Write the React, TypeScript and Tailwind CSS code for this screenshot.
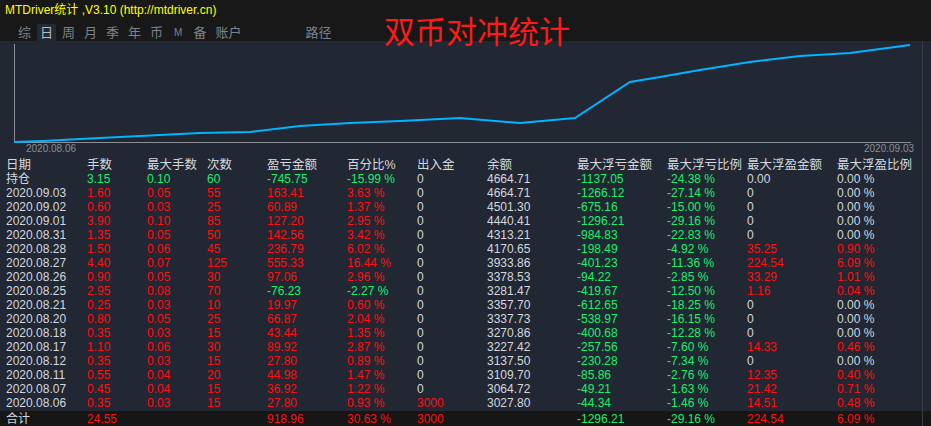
import React from "react";

const R = "text-[#ff1010]";
const G = "text-[#19f06a]";
const W = "text-[#d4d8de]";

type Cell = [string, string];

const cols = [0, 87, 147, 207, 267, 347, 417, 487, 577, 667, 747, 837];
const widths = cols.map((c, i) => (i < cols.length - 1 ? cols[i + 1] - c : 931 - c));

const headers = ["日期", "手数", "最大手数", "次数", "盈亏金额", "百分比%", "出入金", "余额", "最大浮亏金额", "最大浮亏比例", "最大浮盈金额", "最大浮盈比例"];

const raw: string[][] = [
  ["2020.09.03", "1.60", "0.05", "55", "163.41", "3.63 %", "0", "4664.71", "-1266.12", "-27.14 %", "0", "0.00 %"],
  ["2020.09.02", "0.60", "0.03", "25", "60.89", "1.37 %", "0", "4501.30", "-675.16", "-15.00 %", "0", "0.00 %"],
  ["2020.09.01", "3.90", "0.10", "85", "127.20", "2.95 %", "0", "4440.41", "-1296.21", "-29.16 %", "0", "0.00 %"],
  ["2020.08.31", "1.35", "0.05", "50", "142.56", "3.42 %", "0", "4313.21", "-984.83", "-22.83 %", "0", "0.00 %"],
  ["2020.08.28", "1.50", "0.06", "45", "236.79", "6.02 %", "0", "4170.65", "-198.49", "-4.92 %", "35.25", "0.90 %"],
  ["2020.08.27", "4.40", "0.07", "125", "555.33", "16.44 %", "0", "3933.86", "-401.23", "-11.36 %", "224.54", "6.09 %"],
  ["2020.08.26", "0.90", "0.05", "30", "97.06", "2.96 %", "0", "3378.53", "-94.22", "-2.85 %", "33.29", "1.01 %"],
  ["2020.08.25", "2.95", "0.08", "70", "-76.23", "-2.27 %", "0", "3281.47", "-419.67", "-12.50 %", "1.16", "0.04 %"],
  ["2020.08.21", "0.25", "0.03", "10", "19.97", "0.60 %", "0", "3357.70", "-612.65", "-18.25 %", "0", "0.00 %"],
  ["2020.08.20", "0.80", "0.05", "25", "66.87", "2.04 %", "0", "3337.73", "-538.97", "-16.15 %", "0", "0.00 %"],
  ["2020.08.18", "0.35", "0.03", "15", "43.44", "1.35 %", "0", "3270.86", "-400.68", "-12.28 %", "0", "0.00 %"],
  ["2020.08.17", "1.10", "0.06", "30", "89.92", "2.87 %", "0", "3227.42", "-257.56", "-7.60 %", "14.33", "0.46 %"],
  ["2020.08.12", "0.35", "0.03", "15", "27.80", "0.89 %", "0", "3137.50", "-230.28", "-7.34 %", "0", "0.00 %"],
  ["2020.08.11", "0.55", "0.04", "20", "44.98", "1.47 %", "0", "3109.70", "-85.86", "-2.76 %", "12.35", "0.40 %"],
  ["2020.08.07", "0.45", "0.04", "15", "36.92", "1.22 %", "0", "3064.72", "-49.21", "-1.63 %", "21.42", "0.71 %"],
  ["2020.08.06", "0.35", "0.03", "15", "27.80", "0.93 %", "3000", "3027.80", "-44.34", "-1.46 %", "14.51", "0.48 %"],
];

const color = (v: string, i: number) => {
  if (i === 0 || i === 7 || v === "") return W;
  if (v === "0" || v === "0.00" || v === "0.00 %") return W;
  if (v.startsWith("-")) return G;
  return R;
};

const rows: Cell[][] = [
  ["持仓", "3.15", "0.10", "60", "-745.75", "-15.99 %", "0", "4664.71", "-1137.05", "-24.38 %", "0.00", "0.00 %"].map(
    (v, i) => [v, i >= 1 && i <= 5 ? G : color(v, i)] as Cell
  ),
  ...raw.map((r) => r.map((v, i) => [v, color(v, i)] as Cell)),
];

const total: Cell[] = ["合计", "24.55", "", "", "918.96", "30.63 %", "3000", "", "-1296.21", "-29.16 %", "224.54", "6.09 %"].map(
  (v, i) => [v, color(v, i)] as Cell
);

const pts: [number, number][] = [
  [14, 142], [43, 141], [80, 139], [140, 136], [200, 133], [250, 132], [300, 126], [350, 123],
  [400, 121], [460, 118], [520, 123], [575, 118], [630, 82], [660, 77], [700, 70], [750, 62],
  [800, 56], [850, 53], [910, 45],
];

const Row = ({ cells, bg = "" }: { cells: Cell[]; bg?: string }) => (
  <div className={`flex h-[14px] items-center ${bg}`}>
    {cells.map(([v, c], i) => (
      <div key={i} className={`${c} shrink-0 whitespace-nowrap leading-[14px]`} style={{ width: widths[i], paddingLeft: i === 0 ? 6 : 0 }}>
        {v}
      </div>
    ))}
  </div>
);

export default function App() {
  const tabs = ["综", "日", "周", "月", "季", "年", "币", "M", "备", "账户"];
  return (
    <div className="w-[931px] h-[426px] bg-[#212733] overflow-hidden text-[12px] relative" style={{ fontFamily: '"Liberation Sans", "Noto Sans CJK SC", sans-serif' }}>
      <div className="h-[41px] bg-[#181818] relative">
        <div className="text-[#ffff00] text-[12px] leading-[12px] pl-[5px] pt-[4px]">MTDriver统计 ,V3.10 (http://mtdriver.cn)</div>
        <div className="flex items-center mt-[7px] pl-[15px] text-[13px] text-[#7d838c] gap-[3px]">
          {tabs.map((t) => (
            <div key={t} className={`px-[3px] h-[17px] leading-[17px] ${t === "日" ? "bg-[#232a36] text-[#b8bec8]" : ""} ${t === "M" ? "text-[10px] px-[5px]" : ""}`}>
              {t}
            </div>
          ))}
          <div className="ml-[58px]">路径</div>
        </div>
        <div className="absolute left-[384px] top-[14px] text-[#ff1a1a] text-[31px] leading-[32px]" style={{ fontFamily: '"Noto Sans CJK SC", sans-serif' }}>
          双币对冲统计
        </div>
      </div>
      <div className="relative h-[115px]">
        <svg width="931" height="115" className="absolute top-0 left-0">
          <line x1="14.5" y1="3" x2="14.5" y2="101" stroke="#8a8f96" />
          <line x1="14" y1="101.5" x2="911" y2="101.5" stroke="#8a8f96" />
          <polyline points={pts.map(([x, y]) => `${x},${y - 41}`).join(" ")} fill="none" stroke="#00b4ff" strokeWidth="2" />
          <text x="26" y="111" fill="#8a8f96" fontSize="10" fontFamily="Liberation Sans">2020.08.06</text>
          <text x="864" y="111" fill="#8a8f96" fontSize="10" fontFamily="Liberation Sans">2020.09.03</text>
        </svg>
      </div>
      <div className="pt-[2px]">
        <div className="flex h-[14px] items-end text-[#d4d8de]">
          {headers.map((h, i) => (
            <div key={i} className="shrink-0 whitespace-nowrap leading-[14px] text-[12.5px]" style={{ width: widths[i], paddingLeft: i === 0 ? 6 : 0 }}>
              {h}
            </div>
          ))}
        </div>
        {rows.map((r, i) => (
          <Row key={i} cells={r} />
        ))}
        <div className="mt-[1px]">
          <Row cells={total} bg="bg-[#161616] h-[16px]" />
        </div>
      </div>
      <div className="absolute right-[8px] top-[41px] bottom-0 w-[1px] bg-[#3a3f47]" />
    </div>
  );
}
